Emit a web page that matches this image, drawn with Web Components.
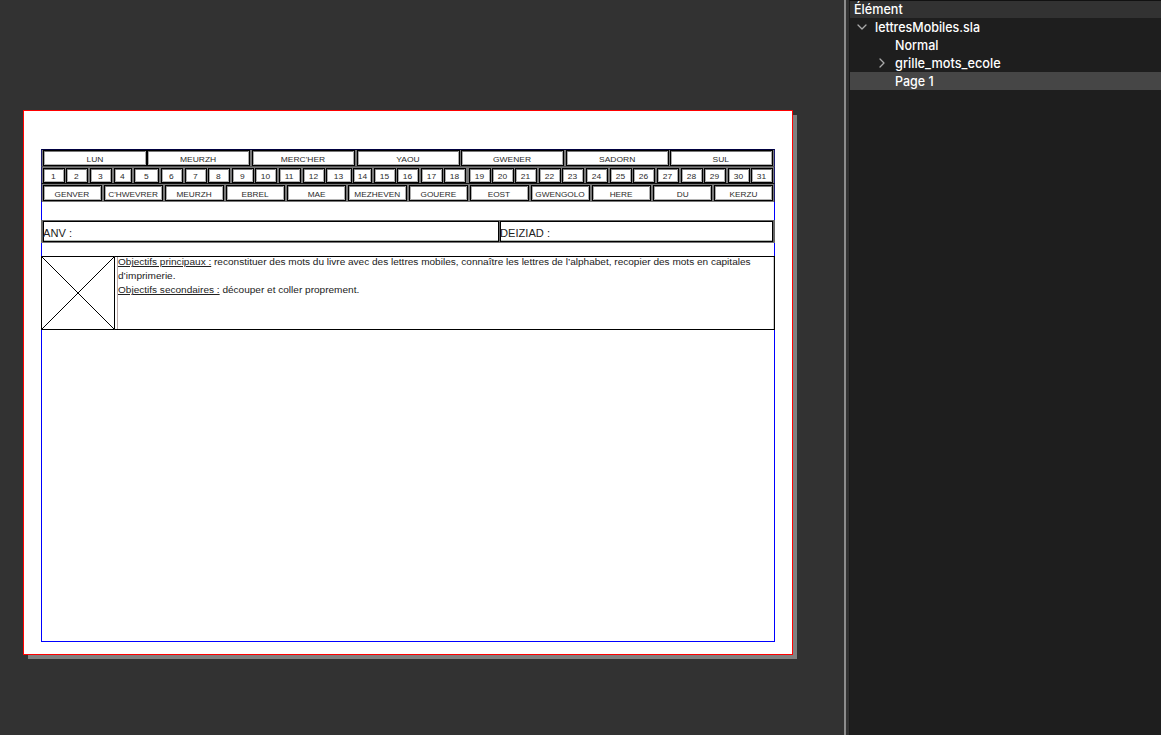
<!DOCTYPE html>
<html lang="fr"><head><meta charset="utf-8"><title>lettresMobiles.sla</title>
<style>html,body{margin:0;height:100%;overflow:hidden;background:#323232}</style></head>
<body><scribus-app></scribus-app>
<script>
const define=(name,html,init)=>customElements.define(name,class extends HTMLElement{
  constructor(){super();const t=document.createElement('template');t.innerHTML=html;
    this.attachShadow({mode:'open'}).append(t.content.cloneNode(true));}
  connectedCallback(){if(init)init(this,this.shadowRoot);}
});
/* one bordered label */
define('grid-cell',`<style>:host{display:flex;box-sizing:border-box;border:1px solid #000;background:#fff;box-shadow:inset 0 -1px #b4b4b4,inset -1px 0 #aaa,inset 0 1px #777,inset 1px 0 #aaa;align-items:center;justify-content:center;color:#2a2a2a;white-space:nowrap;font:8px/10px "Liberation Sans",Arial,sans-serif}
span{display:block;transform:scaleX(var(--sx,1.06));position:relative;top:var(--ty,1.5px);left:var(--tx,0px)}</style><span><slot></slot></span>`);
/* a row of cells: starts = left edges, widths = box widths */
define('cell-row',`<style>:host{display:grid;box-sizing:border-box;padding:1px 0 1px 2px;background:#777}
</style><slot></slot>`,(el)=>{
  const labels=el.getAttribute('labels').split('|');
  const starts=el.getAttribute('starts').split(',').map(Number),w=el.getAttribute('widths').split(',').map(Number);
  el.style.gridTemplateColumns=starts.map((s,i)=>((starts[i+1]||774)-s)+'px').join(' ');
  labels.forEach((t,i)=>{const c=document.createElement('grid-cell');c.textContent=t;c.style.width=(w[i]||w[0])+'px';el.append(c);});
});
define('name-field',`<style>:host{display:flex;box-sizing:border-box;border:1px solid #000;background:#fff;box-shadow:inset 0 -1px #b4bab4;align-items:center;color:#222;white-space:nowrap;font:11px/13px "Liberation Sans",Arial,sans-serif}
span{position:relative;top:1.6px;left:-1px;transform:scaleX(1.01);transform-origin:0 0}</style><span><slot></slot></span>`);
define('image-frame',`<style>:host{display:block;width:74px;height:74px}svg{display:block}</style>
<svg width="74" height="74" viewBox="0 0 74 74" fill="none" stroke="#000"><path d="M.5.5h73v73H.5zM.5.5l73 73M73.5.5l-73 73"/></svg>`);
define('goal-text',`<style>:host{display:block;box-sizing:border-box;flex:1;height:74px;border:1px solid #000;border-left:0;padding:0 0 0 2px;color:#222;font:9.6px/14px "Liberation Sans",Arial,sans-serif}
div{height:72px;box-sizing:border-box;border-left:1px solid #b9a9a9;border-right:1px solid #ccc}
p{margin:0 0 0 -.5px;white-space:nowrap;position:relative;top:-1.6px;width:max-content;transform:scaleX(1.047);transform-origin:0 0}u{text-underline-offset:1px}</style>
<div><p><u>Objectifs principaux :</u> reconstituer des mots du livre avec des lettres mobiles, connaître les lettres de l’alphabet, recopier des mots en capitales</p><p>d’imprimerie.</p><p><u>Objectifs secondaires :</u> découper et coller proprement.</p></div>`);
define('page-sheet',`<style>:host{display:block;box-sizing:border-box;width:770px;height:545px;border:1px solid #f00;background:#fff;box-shadow:4px 4px 0 0 #808080;padding:38px 17px 12px;clip-path:polygon(0 0,770px 0,770px 5px,774px 5px,774px 549px,5px 549px,5px 545px,0 545px)}
.m{box-sizing:border-box;width:734px;height:493px;border:1px solid #00f}
.in{margin:-1px}
cell-row{border-left:1px solid #1a1a70;border-right:1px solid #1a1a70;padding-left:1px}
.d{height:18px;border-top:1px solid #000040;padding-top:0;padding-bottom:0;border-bottom:1px solid #555;--tx:-.4px}
.n{height:17px;--sx:1.05;--tx:-.4px;--ty:1.2px;padding-bottom:0;border-bottom:1px solid #111}.k{height:18px;--sx:1.03;--tx:-.2px}
.f{display:grid;grid-template-columns:457px 274px;height:23px;margin-top:18px;background:#666;padding:1px 1px 0 2px;box-sizing:border-box;border-bottom:1px solid #777}
.f name-field:first-child{width:456px}.f name-field:last-child{width:273px}.t{display:flex;margin-top:13px}</style>
<div class="m"><div class="in">
<cell-row class="d" labels="LUN|MEURZH|MERC'HER|YAOU|GWENER|SADORN|SUL" starts="43,147,252,357,461,566,670" widths="104,103,103,103,103,103,103"></cell-row>
<cell-row class="n" labels="1|2|3|4|5|6|7|8|9|10|11|12|13|14|15|16|17|18|19|20|21|22|23|24|25|26|27|28|29|30|31" starts="43,66,90,114,134,161,185,208,232,255,279,303,326,353,374,397,421,444,469,492,515,539,562,586,610,633,657,681,704,728,751" widths="22,22,22,18,25,22,22,22,22,22,22,22,26,19,22,22,22,22,22,22,22,22,22,22,22,22,22,22,22,22,22"></cell-row>
<cell-row class="k" labels="GENVER|C'HWEVRER|MEURZH|EBREL|MAE|MEZHEVEN|GOUERE|EOST|GWENGOLO|HERE|DU|KERZU" starts="43,104,165,226,287,348,409,470,531,592,653,714" widths="59"></cell-row>
<div class="f"><name-field>ANV :</name-field><name-field>DEIZIAD :</name-field></div>
<div class="t"><image-frame></image-frame><goal-text></goal-text></div>
</div></div>`);
define('tree-row',`<style>:host{display:flex;box-sizing:border-box;height:18px;align-items:center;color:#fff;white-space:nowrap;font:500 13px/18px Inter,sans-serif}
:host([selected]){background:#464646}:host([header]){background:#323232}
svg{width:10px;height:10px;margin-right:8px;fill:none;stroke:#aaa;stroke-width:1.3;stroke-linecap:round;stroke-linejoin:round;visibility:hidden}
:host([header]) svg{display:none}:host([open]) svg,:host([closed]) svg{visibility:visible}:host([closed]) svg{transform:rotate(-90deg)}
span{display:block;transform:scaleX(var(--s,1));transform-origin:0 50%}:host([header]) span{margin-top:-2px}</style><svg viewBox="0 0 10 10"><path d="M1 3l4 4 4-4"/></svg><span><slot></slot></span>`,(el,r)=>{
  el.style.paddingLeft=el.getAttribute('indent')+'px';el.style.setProperty('--s',el.getAttribute('stretch'));});
define('outline-panel',`<style>:host{display:block;flex:1;height:735px;box-sizing:border-box;background:#1e1e1e;border-top:1px solid #111}
tree-row[header]{height:17px}</style>
<tree-row header indent="4" stretch=".97">Élément</tree-row><tree-row open indent="7" stretch=".96">lettresMobiles.sla</tree-row><tree-row indent="27" stretch=".965">Normal</tree-row><tree-row closed indent="27" stretch=".98">grille_mots_ecole</tree-row><tree-row selected indent="27" stretch=".96">Page 1</tree-row>`);
define('scribus-app',`<style>:host{display:flex;width:1161px;height:735px;background:#323232;overflow:hidden}
main{width:844px;box-sizing:border-box;padding:110px 0 0 23px}
i{width:2px;background:#8c8c8c;margin-right:3px}outline-panel{border-left:1px solid #191919}</style>
<main><page-sheet></page-sheet></main><i></i><outline-panel></outline-panel>`);
</script></body></html>
